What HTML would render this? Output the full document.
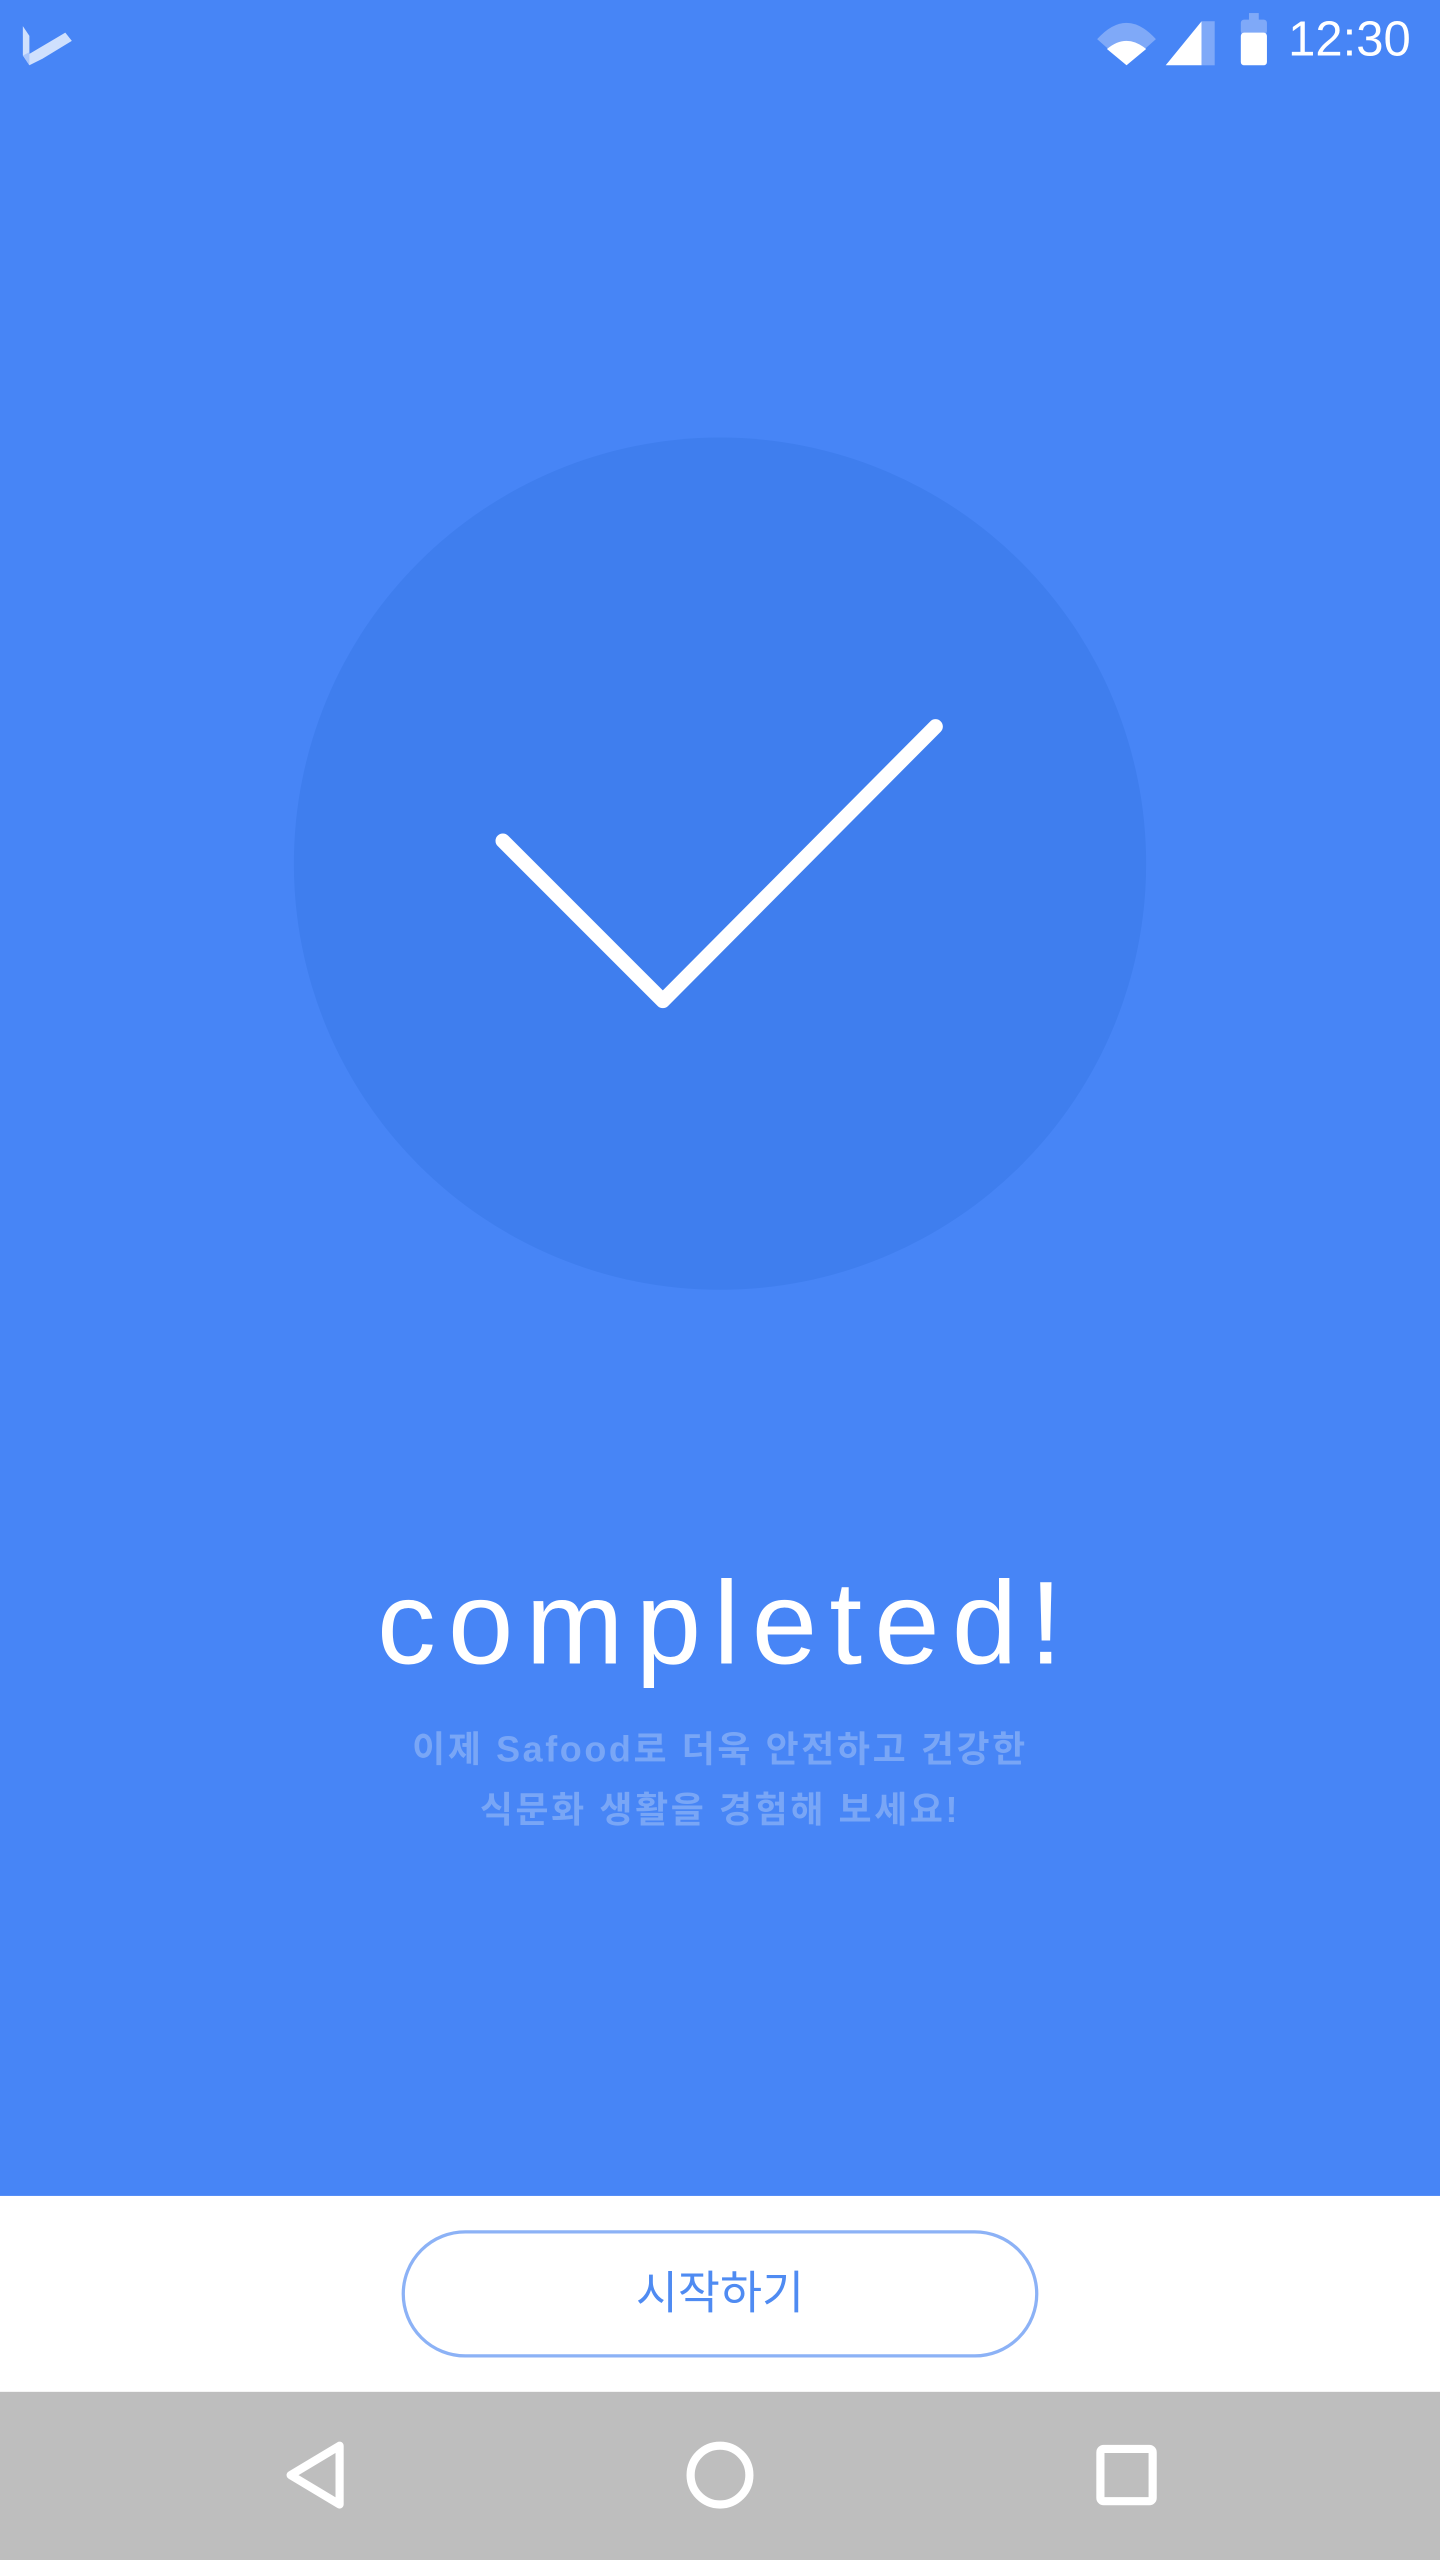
<!DOCTYPE html>
<html><head><meta charset="utf-8"><style>
html,body{margin:0;padding:0;width:1440px;height:2560px;overflow:hidden;background:#fff}
#w{position:absolute;left:0;top:0;width:882px;height:1568px;transform:scale(1.632653);transform-origin:0 0;font-family:"Liberation Sans","Noto Sans CJK KR",sans-serif}
.blue{position:absolute;left:0;top:0;width:882px;height:1345px;background:#4785f6}
.nav{position:absolute;left:0;top:1465px;width:882px;height:103px;background:#bebebe}
.circle{position:absolute;left:180px;top:268px;width:522px;height:522px;border-radius:50%;background:#3f7eee}
.title{position:absolute;left:0;width:882px;top:953px;text-align:center;color:#fff;font-size:72px;letter-spacing:7.5px;text-indent:7px;font-weight:normal;line-height:84px}
.sub{position:absolute;left:0;width:882px;top:1053px;text-align:center;color:#79a6f6;font-size:22px;line-height:37px;letter-spacing:1.6px;font-weight:bold}
.btn{position:absolute;left:246px;top:1366px;width:386px;height:74px;border:2px solid #8cb2f6;border-radius:40px;text-align:center;line-height:74px;color:#4f8bf2;font-size:28px}
.time{position:absolute;left:789px;top:8px;color:#fff;font-size:30px}
</style></head><body><div id="w">
<div class="blue"></div>
<div class="circle"></div>
<svg style="position:absolute;left:0;top:0" width="882" height="1345">
<polyline points="308,515 406,613 573,445" fill="none" stroke="#fff" stroke-width="9" stroke-linecap="round" stroke-linejoin="round"/>
<polygon points="14,16 18,22 18,40 14,34" fill="#cfe0fd"/>
<polygon points="14,34 18,40 18,32" fill="#a9c6fb"/>
<polygon points="18,40 26,36 44,25 40,20 18,33" fill="#cfe0fd"/>
<path d="M672,24 Q690,4 708,24 L690,40 Z" fill="#7fa9f8"/>
<path d="M678,30 Q690,20 702,30 L690,40 Z" fill="#fff"/>
<polygon points="714,40 736,13 736,40" fill="#fff"/>
<rect x="736" y="13" width="8" height="27" fill="#7fa9f8"/>
<rect x="765" y="8" width="6" height="5" fill="#7fa9f8"/>
<rect x="760" y="12" width="16" height="9" rx="2" fill="#7fa9f8"/>
<rect x="760" y="20" width="16" height="20" rx="2" fill="#fff"/>
</svg>
<div class="time">12:30</div>
<div class="title">completed!</div>
<div class="sub">이제 Safood로 더욱 안전하고 건강한<br>식문화 생활을 경험해 보세요!</div>
<div class="btn">시작하기</div>
<div class="nav"></div>
<svg style="position:absolute;left:0;top:1465px" width="882" height="103">
<polygon points="208,33 208,69 178,51" fill="none" stroke="#fff" stroke-width="5" stroke-linejoin="round"/>
<circle cx="441" cy="51" r="18" fill="none" stroke="#fff" stroke-width="5"/>
<rect x="674" y="35" width="32" height="32" rx="2" fill="none" stroke="#fff" stroke-width="5"/>
</svg>
</div></body></html>
